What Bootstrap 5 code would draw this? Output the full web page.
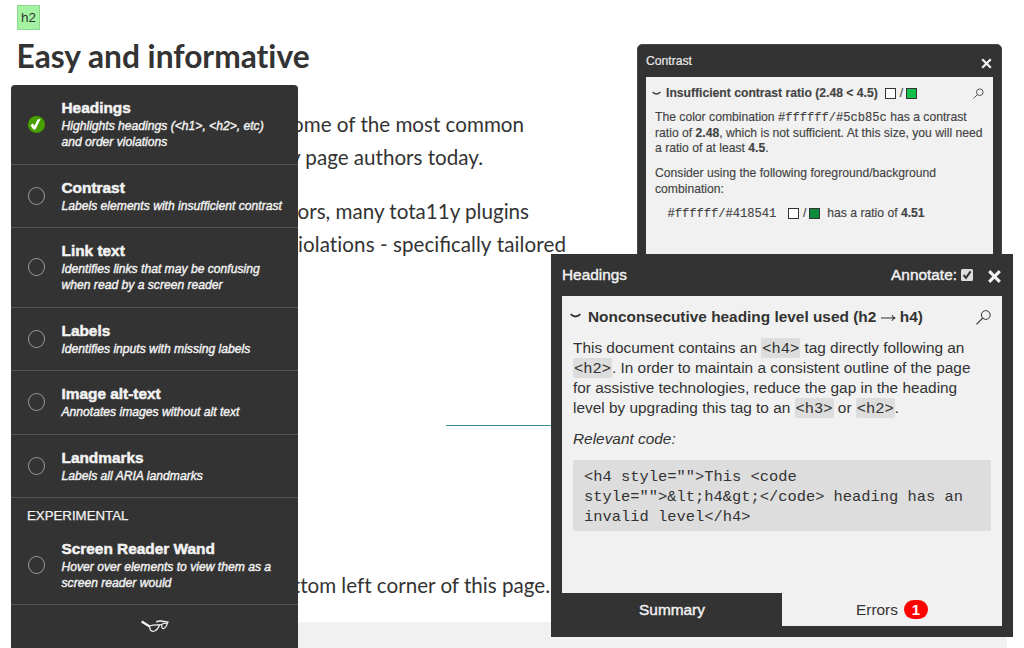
<!DOCTYPE html>
<html lang="en">
<head>
<meta charset="utf-8">
<meta name="viewport" content="width=device-width, initial-scale=1">
<title>tota11y</title>
<link href="https://cdn.jsdelivr.net/npm/bootstrap@5.3.0/dist/css/bootstrap.min.css" rel="stylesheet">
<script src="https://cdn.jsdelivr.net/npm/bootstrap@5.3.0/dist/js/bootstrap.bundle.min.js" defer></script>
<style>
body{font-family:"Liberation Sans",Arial,sans-serif;color:#333;background:#fff}
.stage{width:1024px;height:648px}
.intro{font-family:Lato,sans-serif;font-size:20.6px;line-height:33px;white-space:nowrap;font-variant-ligatures:none}
.liga{font-variant-ligatures:normal}
.intro h2{font-size:31.7px;font-weight:700;line-height:40px;margin:6px 0 32px 16.5px;color:#333}
.intro p{width:566px;margin:0 0 21px;text-align:right}
.wider{letter-spacing:.08px}
.tag-label{margin:5px 0 0 17px;width:23px;height:25px;background:#a3f3a3;border:1px solid #8fd68f;font:13.5px/23px "Liberation Sans",sans-serif}
.rule{height:1px;width:200px;margin:164px 0 143px 446px;background:#3a8ea0}
.foot{height:26px;margin:20px 17px 0 11px;background:#f1f1f1}
.pe42{padding-right:42px}.pe84{padding-right:83px}.pe37{padding-right:37px}.pe16{padding-right:16px}
.toolbar{left:11px;top:85px;width:287px;height:563px;background:#333;color:#f2f2f2;border-radius:4px 4px 0 0;white-space:nowrap}
.plugin{height:63px;border-bottom:1px solid #555;padding-left:17px}
.plugin.two{height:80px}.plugin.mid{height:64px}.plugin.wand{height:78px}
.ring{width:17px;height:18px;border:1px solid #999;border-radius:50%;margin:-1px 16.5px 0 0;flex:none}
.ring.on{border:0;height:17px}
.ring svg{display:block}
.pname{font-size:15.4px;font-weight:700;line-height:19px;-webkit-text-stroke:.5px #f2f2f2;margin:-1px 0 1px}
.pdesc{font-size:12.13px;font-style:italic;line-height:16px;-webkit-text-stroke:.4px #f2f2f2}
.group{height:29px;padding:8px 0 0 16px;font-size:13.25px;line-height:20px;-webkit-text-stroke:.25px #f2f2f2}
.panel-a{left:637px;top:44px;width:365px;height:230px;background:#333;border-radius:5px 5px 0 0;border:1px solid #484848;padding:0 8px;font-size:12.17px;line-height:15.8px;color:#444;white-space:nowrap}
.panel-a .bar{height:32px;color:#e8e8e8;padding-top:2px;-webkit-text-stroke:.2px #e8e8e8}
.panel-a .sheet{height:200px;background:#f1f1f1;padding:9px 9px 0 9px}
.panel-a .sheet div{-webkit-text-stroke:.15px #444}
.m12{font-family:"Liberation Mono","Courier New",monospace;font-size:12.1px;line-height:1}
.sw{display:inline-block;width:11px;height:11px;border:1px solid #333;background:#fff}
.sw.g1{background:#14be4b}.sw.g2{background:#0c8c3a}
.panel-b{left:551px;top:254px;width:462px;height:383px;background:#333;padding:0 11px;font-size:15.4px;line-height:20px;white-space:nowrap}
.panel-b .bar{height:42px;color:#f2f2f2;-webkit-text-stroke:.4px #f2f2f2}
.panel-b .sheet{height:297px;background:#f1f1f1;padding:11px 11px 0 11px}
.panel-b code{font-family:"Liberation Mono","Courier New",monospace;font-size:15.4px;line-height:1;color:#333;background:#ddd;border-radius:2px;padding:2px 1px 0}
.panel-b pre{font-family:"Liberation Mono","Courier New",monospace;font-size:15.42px;line-height:20px;background:#ddd;border-radius:2px;padding:7px 11px 4px;height:71px;margin:11px 0 0;color:#333}
.tab-l{width:220px;height:33px;color:#f2f2f2;-webkit-text-stroke:.4px #f2f2f2}
.tab-r{width:220px;height:33px;background:#f1f1f1;color:#333}
.count{width:24px;height:19px;border-radius:10px;background:#f00;color:#fff;font-size:15px;line-height:19px;font-weight:700;margin-left:6px}
</style>
</head>
<body>
<div class="stage position-relative overflow-hidden">
  <main class="intro overflow-hidden">
    <div class="tag-label text-center">h2</div>
    <h2>Easy and informative</h2>
    <p><span class="d-block pe42">ome of the most common</span><span class="d-block pe84">y page authors today.</span></p>
    <p><span class="d-block pe37">ors, many tota11y plugins</span><span class="d-block"><span class="wider">iolations - </span><span class="liga">specifically</span><span class="wider"> tailored</span></span></p>
    <div class="rule"></div>
    <p class="mb-0 pe16">ttom left corner of this page.</p>
    <div class="foot"></div>
  </main>

  <aside class="toolbar position-absolute">
    <div class="plugin two d-flex align-items-center"><span class="ring on"><svg width="17" height="17" viewBox="0 0 17 17"><circle cx="8.5" cy="8.5" r="8.5" fill="#48a000"/><path d="M2.4 9.2 4.8 7.6 6.4 9.8 9.6 3.4Q10.6 2.9 12.6 3L7.4 13.4H5.4z" fill="#fff"/></svg></span><div><div class="pname">Headings</div><div class="pdesc">Highlights headings (&lt;h1&gt;, &lt;h2&gt;, etc)<br>and order violations</div></div></div>
    <div class="plugin d-flex align-items-center"><span class="ring"></span><div><div class="pname">Contrast</div><div class="pdesc">Labels elements with insufficient contrast</div></div></div>
    <div class="plugin two d-flex align-items-center"><span class="ring"></span><div><div class="pname">Link text</div><div class="pdesc">Identifies links that may be confusing<br>when read by a screen reader</div></div></div>
    <div class="plugin d-flex align-items-center"><span class="ring"></span><div><div class="pname">Labels</div><div class="pdesc">Identifies inputs with missing labels</div></div></div>
    <div class="plugin mid d-flex align-items-center"><span class="ring"></span><div><div class="pname">Image alt-text</div><div class="pdesc">Annotates images without alt text</div></div></div>
    <div class="plugin d-flex align-items-center"><span class="ring"></span><div><div class="pname">Landmarks</div><div class="pdesc">Labels all ARIA landmarks</div></div></div>
    <div class="group">EXPERIMENTAL</div>
    <div class="plugin wand d-flex align-items-center"><span class="ring"></span><div><div class="pname">Screen Reader Wand</div><div class="pdesc">Hover over elements to view them as a<br>screen reader would</div></div></div>
    <div class="d-flex justify-content-center" style="padding-top:15px"><svg width="28" height="13" viewBox="0 0 28 13" fill="none" stroke="#f2f2f2"><path d="M.6 1.4 8.8 6.4" stroke-width="2.4"/><path d="M8.4 6 9.2 9.6Q10.2 12 13.5 11 17 9.6 18.4 5 13 4.6 8.4 6" stroke-width="1.3"/><path d="M18.2 5.2 21 4.3M20.8 4.2Q20.3 8.8 22.4 8.6 25 8 26.4 3.4 23.5 2.9 20.8 4.2" stroke-width="1.2"/><path d="M15.2 2.2Q17 .6 20 1L27.6 2.2" stroke-width="1.5"/></svg></div>
  </aside>

  <section class="panel-a position-absolute">
    <div class="bar d-flex justify-content-between align-items-center"><span>Contrast</span><svg width="11" height="11" viewBox="0 0 11 11" style="margin:2px 1px 0 0" stroke="#f2f2f2" stroke-width="2.3"><path d="M1.2 1.2 9.8 9.8M9.8 1.2 1.2 9.8"/></svg></div>
    <div class="sheet">
      <div class="d-flex align-items-center" style="margin-bottom:8px"><svg width="9" height="5" viewBox="0 0 9 5" fill="none" stroke="#444" stroke-width="1.4" style="margin-left:-3px;margin-right:5px"><path d="M.6 1Q4.5 5 8.4 1"/></svg><b>Insufficient contrast ratio (2.48 &lt; 4.5)</b><span class="sw" style="margin-left:7px"></span><span class="px-1">/</span><span class="sw g1" style="margin-left:-1px"></span><svg class="ms-auto" width="11" height="11" viewBox="0 0 11 11" fill="none" stroke="#555"><circle cx="6.8" cy="4.2" r="3.3"/><path d="M4.4 6.6.6 10.4"/></svg></div>
      <div>The color combination <span class="m12">#ffffff/#5cb85c</span> has a contrast<br>ratio of <b>2.48</b>, which is not sufficient. At this size, you will need<br>a ratio of at least <b>4.5</b>.</div>
      <div style="margin-top:9px">Consider using the following foreground/background<br>combination:</div>
      <div class="d-flex align-items-center" style="margin-top:8px;padding-left:12.5px"><span class="m12">#ffffff/#418541</span><span class="sw" style="margin-left:11.5px"></span><span class="px-1">/</span><span class="sw g2" style="margin:0 7px 0 -1px"></span><span>has a ratio of <b>4.51</b></span></div>
    </div>
  </section>

  <section class="panel-b position-absolute">
    <div class="bar d-flex align-items-center"><span>Headings</span><span class="ms-auto">Annotate:</span><svg class="ms-1" width="12" height="12" viewBox="0 0 12 12"><rect width="12" height="12" rx="1.5" fill="#ddd"/><path d="M2.6 6 5 8.8 9.6 2.4" fill="none" stroke="#333" stroke-width="2"/></svg><svg width="13" height="13" viewBox="0 0 13 13" style="margin:2px 1.5px 0 14.5px" stroke="#f2f2f2" stroke-width="3.1"><path d="M1.2 1.2 11.8 11.8M11.8 1.2 1.2 11.8"/></svg></div>
    <div class="sheet">
      <div class="d-flex align-items-center"><svg width="11" height="6" viewBox="0 0 11 6" fill="none" stroke="#333" stroke-width="1.8" style="margin:-2px 7px 0 -3px"><path d="M.6 1.2Q5.5 5.8 10.4 1.2"/></svg><b>Nonconsecutive heading level used (h2 <svg width="15" height="8" viewBox="0 0 15 8" fill="none" stroke="#333" stroke-width="1.1"><path d="M0 4H14M11 1.2Q12 3.5 14.3 4 12 4.5 11 6.8"/></svg> h4)</b><svg class="ms-auto" width="15" height="15" viewBox="0 0 15 15" fill="none" stroke="#333"><circle cx="9.8" cy="5" r="4.4"/><path d="M6.6 8.2.5 14.3" stroke-width="1.2"/></svg></div>
      <div style="margin-top:11px">This document contains an <code>&lt;h4&gt;</code> tag directly following an<br><code>&lt;h2&gt;</code>. In order to maintain a consistent outline of the page<br>for assistive technologies, reduce the gap in the heading<br>level by upgrading this tag to an <code>&lt;h3&gt;</code> or <code>&lt;h2&gt;</code>.</div>
      <div class="fst-italic" style="margin-top:11px">Relevant code:</div>
      <pre>&lt;h4 style=""&gt;This &lt;code
style=""&gt;&amp;lt;h4&amp;gt;&lt;/code&gt; heading has an
invalid level&lt;/h4&gt;</pre>
    </div>
    <div class="d-flex"><div class="tab-l d-flex align-items-center justify-content-center">Summary</div><div class="tab-r d-flex align-items-center justify-content-center">Errors<span class="count text-center">1</span></div></div>
  </section>
</div>
</body>
</html>
